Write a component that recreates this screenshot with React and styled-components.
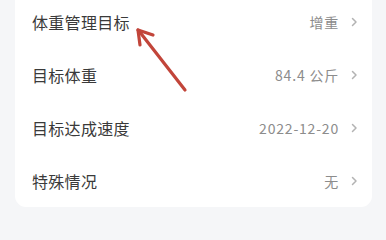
import styled, { createGlobalStyle } from 'styled-components';

const GlobalStyle = createGlobalStyle`
  html, body {
    margin: 0;
    padding: 0;
    background: #f5f6f8;
    font-family: "Noto Sans CJK SC", "Noto Sans", sans-serif;
  }
`;

const Page = styled.div`
  position: relative;
  width: 386px;
  height: 232px;
  overflow: hidden;
  padding: 0 14px 0 15px;
  box-sizing: border-box;
`;

const Card = styled.div`
  margin-top: -5px;
  background: #fff;
  border-radius: 0 0 11px 11px;
  padding: 0 14px 0 17px;
`;

const Row = styled.div`
  display: flex;
  align-items: center;
  justify-content: space-between;
  height: 53px;
`;

const Label = styled.span`
  font-size: 16px;
  color: #3a3a3a;
  letter-spacing: 0.3px;
`;

const Right = styled.div`
  display: flex;
  align-items: center;
  gap: 12px;
`;

const Value = styled.span`
  font-size: 14px;
  color: #8c8c8c;
  letter-spacing: 0.8px;
`;

const Arrow = styled.svg`
  position: absolute;
  left: 130px;
  top: 22px;
`;

const Chevron = () => (
  <svg width="7" height="10" viewBox="0 0 7 10">
    <path d="M1.5 1.5 L5 5 L1.5 8.5" fill="none" stroke="#b3b3b3" strokeWidth="1.5" strokeLinecap="round" strokeLinejoin="round" />
  </svg>
);

const rows = [
  { label: '体重管理目标', value: '增重' },
  { label: '目标体重', value: '84.4 公斤' },
  { label: '目标达成速度', value: '2022-12-20' },
  { label: '特殊情况', value: '无' },
];

export default function App() {
  return (
    <Page>
      <GlobalStyle />
      <Card>
        {rows.map((r) => (
          <Row key={r.label}>
            <Label>{r.label}</Label>
            <Right>
              <Value>{r.value}</Value>
              <Chevron />
            </Right>
          </Row>
        ))}
      </Card>
      <Arrow width="64" height="74" viewBox="0 0 64 74">
        <g stroke="#c2453a" strokeWidth="3.2" strokeLinecap="round" fill="none">
          <path d="M55 68 L9 9" />
          <path d="M8 8 L23 13" />
          <path d="M8 8 L10 23" />
        </g>
      </Arrow>
    </Page>
  );
}
